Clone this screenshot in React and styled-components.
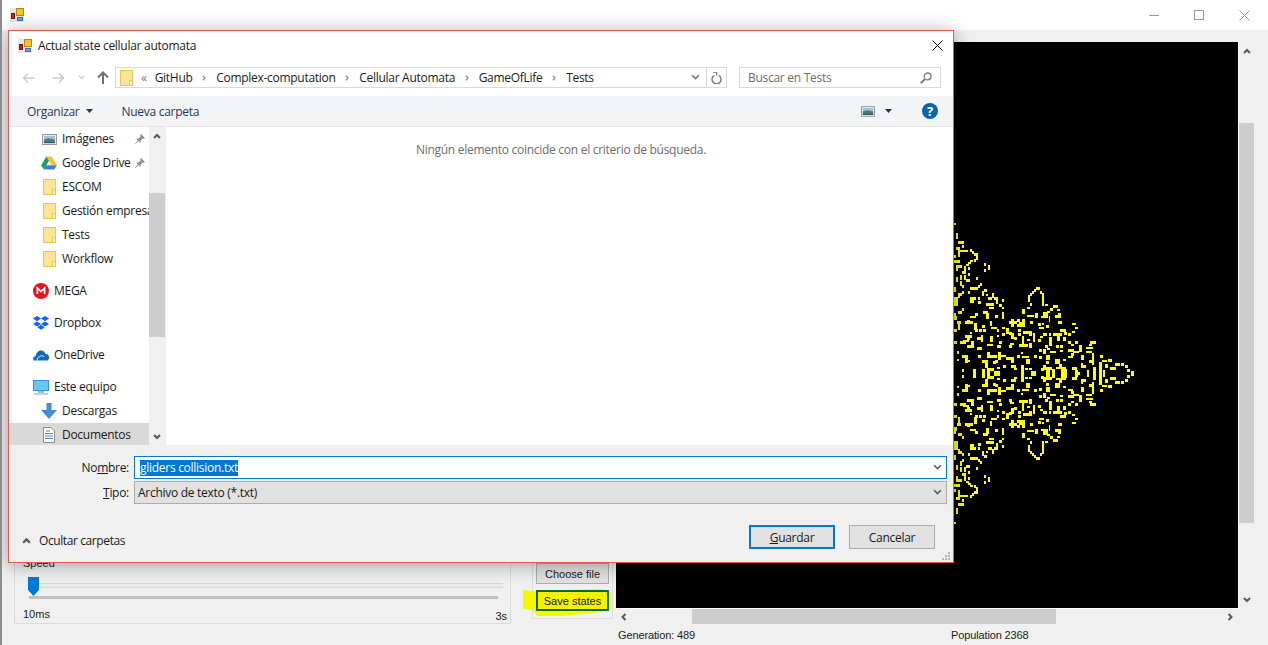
import React from 'react'
import styled, { createGlobalStyle } from 'styled-components'

const GlobalStyle = createGlobalStyle`
  html, body {
    margin: 0;
    padding: 0;
    overflow: hidden;
    background: #f0f0f0;
  }
  * { box-sizing: border-box; }
`

const UI_FONT = `'Open Sans', 'Noto Sans', sans-serif`
const FORM_FONT = `'Liberation Sans', Arial, sans-serif`

/* ---------- automaton cells, read off the picture in 3x crop coordinates ---------- */
const TOP_LEFT = [
  [12,8,6,6],[18,40,6,16],[24,64,18,6],[36,76,6,6],[18,82,12,6],[24,90,30,6],[24,96,6,14],[60,88,6,6],[66,94,6,6],
  [72,100,12,6],[78,106,6,12],[12,106,6,6],[12,120,18,8],[72,118,6,6],[60,120,8,6],[54,126,8,6],[48,132,8,6],
  [102,130,6,6],[114,136,6,12],[102,148,6,6],[18,136,6,16],[24,136,12,6],[42,138,6,18],[36,154,12,6],[54,142,6,6],
  [54,160,6,6],[18,172,6,12],[30,166,6,14],[42,166,6,14],[48,178,12,6],[30,184,6,12],[78,172,6,6],[36,196,6,6],
  [12,202,6,12],[60,202,24,6],[84,196,6,6],[90,190,6,6],[102,208,8,6],[96,214,6,12],[108,222,6,6],[36,214,6,6],
  [24,220,12,6],[54,214,6,6],[24,226,6,6],[60,232,18,6],[12,232,12,24],[126,220,6,12],[114,232,12,6],[84,232,6,6],
  [132,232,12,6],[138,238,6,12],[156,238,6,6],[240,220,6,6],[246,214,6,6],[252,208,6,6],[258,202,12,6],[270,214,6,6],
  [276,226,6,30],[234,226,6,18],
]
const MIDDLE = [
  [60,0,12,8],[84,4,8,8],[108,8,24,8],[116,20,16,6],[148,12,6,8],[156,20,6,6],[240,8,6,10],[232,20,8,6],[24,32,12,8],
  [36,24,6,8],[12,40,6,6],[60,48,16,6],[76,40,6,8],[100,32,12,8],[108,40,8,16],[52,60,8,6],[12,48,8,12],[136,44,8,8],
  [156,36,6,20],[216,28,8,12],[232,44,20,6],[256,40,6,12],[280,36,8,10],[272,48,14,6],[296,48,4,16],[20,64,12,6],
  [44,64,24,8],[72,68,8,20],[24,70,6,18],[120,64,6,12],[176,64,8,8],[184,56,8,24],[192,64,8,8],[200,58,8,6],[208,66,8,6],
  [216,56,8,24],[200,72,16,8],[240,64,8,6],[264,68,8,8],[288,76,8,8],[96,76,8,6],[156,80,8,6],[100,88,8,6],[88,88,6,6],
  [76,88,6,6],[124,80,16,6],[140,88,6,6],[168,84,8,16],[176,96,8,8],[204,88,8,8],[220,92,24,8],[236,100,8,8],[268,80,12,6],
  [12,88,8,6],[60,96,6,6],[44,104,20,8],[52,112,8,8],[40,120,16,6],[92,104,6,20],[80,112,12,6],[120,108,8,16],[140,104,6,6],
  [156,100,8,6],[184,100,8,16],[192,112,8,8],[204,100,8,8],[248,100,6,24],[216,108,6,24],[280,100,8,6],[296,100,4,8],
  [264,116,8,8],[30,124,18,6],[12,124,8,6],[64,124,8,18],[52,136,20,6],[148,124,8,6],[180,128,12,6],[176,136,8,8],
  [208,132,24,8],[232,116,6,6],[236,128,8,14],[80,140,16,8],[112,132,16,6],[140,136,12,6],[20,152,6,8],[268,148,6,6],
  [280,152,8,8],[36,164,16,8],[44,172,8,16],[52,180,8,6],[84,164,8,8],[112,156,8,16],[120,164,20,8],[144,156,8,24],
  [152,164,16,6],[168,172,14,6],[184,172,8,16],[200,164,8,8],[212,156,6,6],[216,168,20,6],[228,176,12,16],[252,164,8,8],
  [268,168,8,8],[288,164,12,8],[96,180,16,8],[104,188,8,14],[128,184,8,6],[136,180,8,8],[20,176,6,6],[36,208,6,6],
  [68,208,8,16],[96,208,8,16],[112,204,20,8],[112,212,8,12],[132,212,16,12],[160,196,8,8],[184,196,12,8],[192,204,8,6],
  [212,196,8,28],[224,204,8,6],[236,204,8,6],[244,212,14,12],[272,204,8,8],[280,196,8,8],[288,204,8,20],[140,200,8,6],
]
const TIP = [
  [0,32,6,6],[6,40,6,24],[14,72,8,6],[38,76,16,6],[30,84,8,8],[50,86,8,6],[14,96,8,16],[54,98,8,16],[22,92,6,6],[46,106,6,6],
  [54,124,12,6],[6,128,6,6],[96,128,12,6],[0,140,6,6],[104,140,8,6],[60,148,16,6],[96,152,8,6],[12,160,8,6],[26,160,6,6],
  [40,160,24,6],[72,156,8,8],[84,160,8,6],[0,168,8,6],[28,172,8,24],[52,168,8,14],[70,172,8,10],[150,184,16,6],[146,192,8,6],
  [84,184,8,6],[104,184,8,6],[92,192,8,6],[138,200,20,6],[138,212,16,6],[14,196,8,6],[22,204,8,6],[48,196,8,6],[60,196,8,6],
  [60,210,8,6],[0,208,6,6],[8,208,8,6],[30,212,16,6],[84,208,16,6],[116,196,8,20],[100,212,16,6],[92,220,8,6],[84,228,14,6],
  [124,224,6,14],[180,226,8,8],[156,220,6,34],[148,240,8,8],[18,232,12,6],[46,236,12,6],[70,236,6,6],[204,238,12,6],
  [186,240,14,6],[18,244,8,8],[44,244,16,8],[56,252,10,8],[178,246,8,24],[122,248,6,14],[130,256,8,8],[226,250,14,6],
  [244,250,6,6],[196,252,6,12],[254,256,8,8],[8,260,28,8],[48,260,30,6],[96,262,14,8],[160,262,8,22],[176,268,8,16],
  [210,262,18,6],[262,266,8,8],[272,274,8,10],[20,268,8,16],[36,268,8,16],[62,268,8,16],[72,268,8,16],[104,270,8,14],
  [112,278,8,6],[140,270,6,14],[188,270,6,14],
]

const CENTER_Y = 373.5
const cellPath = () => {
  let d = ''
  const add = (list, ox, oy) => {
    list.forEach(([x, y, w, h]) => {
      const px = (ox + x / 3 - 616).toFixed(2)
      const py = oy + y / 3
      const pw = (w / 3 + 0.3).toFixed(2)
      const ph = h / 3 + 0.3
      const mirrored = 2 * CENTER_Y - py - ph
      d += `M${px} ${(py - 42).toFixed(2)}h${pw}v${ph.toFixed(2)}h${-pw}z`
      d += `M${px} ${(mirrored - 42).toFixed(2)}h${pw}v${ph.toFixed(2)}h${-pw}z`
    })
  }
  add(TOP_LEFT, 950, 220)
  add(MIDDLE, 950, 300)
  add(TIP, 1040, 280)
  return d
}
const CELLS = cellPath()

/* ---------- icons ---------- */
const AppIcon = () => (
  <svg width="14" height="14" viewBox="0 0 14 14">
    <rect x="0" y="0" width="14" height="14" fill="#e6e6e6" />
    <rect x="6.5" y="0.5" width="7" height="7" fill="#f6c519" stroke="#a98a20" />
    <rect x="1.5" y="5.5" width="3" height="5" fill="#c5221c" stroke="#7a1512" />
    <rect x="7.5" y="9.5" width="5" height="3" fill="#6ea3e0" stroke="#3f6fae" />
  </svg>
)

const Folder = ({ w = 13, h = 16 }) => (
  <svg width={w} height={h} viewBox="0 0 13 16">
    <rect x="0.5" y="0.5" width="12" height="15" fill="#fde595" stroke="#eac65a" />
    <rect x="9.5" y="10.5" width="3" height="5" fill="#fff1b8" stroke="#eac65a" />
  </svg>
)

const PicturesIcon = ({ w = 16, h = 12 }) => (
  <svg width={w} height={h} viewBox="0 0 16 12">
    <rect x="0.5" y="0.5" width="15" height="11" fill="#eef3f5" stroke="#8d8d8d" />
    <rect x="2" y="2" width="12" height="4" fill="#9fc3dd" />
    <path d="M2 6 L7 4.6 L14 6 V8 H2 Z" fill="#4f7f6a" />
    <rect x="2" y="8" width="12" height="2" fill="#27506b" />
  </svg>
)

const DriveIcon = () => (
  <svg width="16" height="14" viewBox="0 0 16 14">
    <path d="M5.3 0.5 H10.6 L15.8 9 H10.7 Z" fill="#fbc02d" />
    <path d="M5.3 0.5 L0.2 9.5 L2.8 13.5 L8 4.8 Z" fill="#1e9e5a" />
    <path d="M5.2 9.3 H15.8 L13.2 13.5 H2.8 Z" fill="#3f7fe8" />
  </svg>
)

const MegaIcon = () => (
  <svg width="16" height="16" viewBox="0 0 16 16">
    <circle cx="8" cy="8" r="8" fill="#e3141e" />
    <path d="M4.4 11 V5 L8 8.6 L11.6 5 V11" fill="none" stroke="#fff" strokeWidth="1.7" />
  </svg>
)

const DropboxIcon = () => (
  <svg width="16" height="14" viewBox="0 0 16 14">
    <path
      d="M4 0 L8 2.6 L4 5.2 L0 2.6 Z M12 0 L16 2.6 L12 5.2 L8 2.6 Z M4 5.4 L8 8 L4 10.6 L0 8 Z M12 5.4 L16 8 L12 10.6 L8 8 Z M8 8.8 L11.6 11.2 L8 13.8 L4.4 11.2 Z"
      fill="#0f62fe"
    />
  </svg>
)

const OneDriveIcon = () => (
  <svg width="16" height="11" viewBox="0 0 16 11">
    <path
      d="M0.6 10.6 C-0.6 8.6 0.4 6.4 2.6 6.2 C3 3 5.4 0.4 8.4 0.6 C10.4 0.7 11.8 2 12.4 3.8 C14.8 3.8 16.4 5.8 16 8 C15.8 9.6 14.8 10.6 13.6 10.6 Z"
      fill="#0f6cbd"
    />
    <path d="M4.4 10.6 C3.6 8.6 5 6.8 6.8 6.8 C7.6 5.4 10 5.2 11 6.8" fill="none" stroke="#fff" strokeWidth="0.9" />
  </svg>
)

const MonitorIcon = () => (
  <svg width="16" height="15" viewBox="0 0 16 15">
    <rect x="0" y="0" width="16" height="11" fill="#2a9ae4" />
    <rect x="1" y="1" width="14" height="9" fill="#6fc4f2" />
    <rect x="5" y="11" width="6" height="2" fill="#a9b6bf" />
    <rect x="1" y="13" width="14" height="2" fill="#c8d1d6" />
  </svg>
)

const DownloadIcon = () => (
  <svg width="16" height="16" viewBox="0 0 16 16">
    <path d="M5.5 0 H10.5 V7 H16 L8 16 L0 7 H5.5 Z" fill="#3f8fdc" />
  </svg>
)

const DocsIcon = () => (
  <svg width="12" height="16" viewBox="0 0 12 16">
    <path d="M0.5 0.5 H8 L11.5 4 V15.5 H0.5 Z" fill="#fafafa" stroke="#8e8e8e" />
    <path d="M3 4 H7 M2 6.5 H10 M2 9 H10 M2 11.5 H10" stroke="#4f88c4" strokeWidth="1" />
  </svg>
)

const PinIcon = () => (
  <svg width="10" height="10" viewBox="0 0 10 10">
    <path d="M6 0 L10 4 L8.8 4.8 L7.6 4.4 L5.6 6.6 L5.6 8 L4.8 8.6 L1.6 5.2 L2.2 4.4 L3.6 4.4 L5.6 2.4 L5.2 1.2 Z" fill="#8f8f8f" />
    <path d="M3 7 L0.4 9.6" stroke="#8f8f8f" />
  </svg>
)

const Chevron = ({ dir = 'down', color = '#5a5a5a', size = 8, weight = 2 }) => {
  const points = {
    down: '1,2 4,5 7,2',
    up: '1,6 4,3 7,6',
    left: '5.5,1 2.5,4 5.5,7',
    right: '2.5,1 5.5,4 2.5,7',
  }
  return (
    <svg width={size} height={size} viewBox="0 0 8 8">
      <polyline points={points[dir]} fill="none" stroke={color} strokeWidth={weight} />
    </svg>
  )
}

const Triangle = ({ color = '#1e395b' }) => (
  <svg width="7" height="4" viewBox="0 0 7 4">
    <path d="M0 0 H7 L3.5 4 Z" fill={color} />
  </svg>
)

const NavArrow = ({ left, color }) => (
  <svg width="13" height="12" viewBox="0 0 13 12">
    <path
      d={left ? 'M12.5 6 H1.5 M6 1.5 L1.5 6 L6 10.5' : 'M0.5 6 H11.5 M7 1.5 L11.5 6 L7 10.5'}
      fill="none"
      stroke={color}
      strokeWidth="1.4"
    />
  </svg>
)

const UpArrow = () => (
  <svg width="12" height="13" viewBox="0 0 12 13">
    <path d="M6 13 V1.5 M1 6.5 L6 1.5 L11 6.5" fill="none" stroke="#6f6f6f" strokeWidth="2" />
  </svg>
)

const RefreshIcon = () => (
  <svg width="11" height="12" viewBox="0 0 11 12">
    <path d="M3.5 2.8 A4.5 4.5 0 1 0 8 2.8" fill="none" stroke="#7a7a7a" strokeWidth="1.4" transform="translate(-0.2 0.6)" />
    <path d="M2 0 H5.6 V3.6" fill="none" stroke="#7a7a7a" strokeWidth="1.3" />
  </svg>
)

const SearchIcon = () => (
  <svg width="12" height="12" viewBox="0 0 12 12">
    <circle cx="7.6" cy="4.4" r="3.4" fill="none" stroke="#7f7f7f" strokeWidth="1.3" />
    <path d="M5 7 L0.8 11.2" stroke="#7f7f7f" strokeWidth="2" />
  </svg>
)

const CloseIcon = ({ color = '#000', size = 11 }) => (
  <svg width={size} height={size} viewBox="0 0 11 11">
    <path d="M0.5 0.5 L10.5 10.5 M10.5 0.5 L0.5 10.5" stroke={color} fill="none" />
  </svg>
)

const Grip = () => (
  <svg width="8" height="8" viewBox="0 0 8 8">
    <path d="M6 0h2v2h-2z M3 3h2v2h-2z M6 3h2v2h-2z M0 6h2v2h-2z M3 6h2v2h-2z M6 6h2v2h-2z" fill="#b5b5b5" />
  </svg>
)

/* ---------- main window ---------- */
const Window = styled.div`
  width: 1268px;
  height: 645px;
  position: relative;
  display: flex;
  flex-direction: column;
  overflow: hidden;
  background: #f0f0f0;
  border-left: 2px solid #8c8c8c;
  font-family: ${FORM_FONT};
  font-size: 11px;
  color: #111;
`

const TitleBar = styled.div`
  height: 30px;
  flex: none;
  background: #fff;
  display: flex;
  align-items: center;
  padding-left: 8px;
  padding-right: 1px;
`

const WindowButtons = styled.div`
  margin-left: auto;
  display: flex;
`

const WindowButton = styled.div`
  width: ${({ $wide }) => ($wide ? 46 : 45)}px;
  height: 30px;
  display: flex;
  align-items: center;
  justify-content: center;
`

const MinLine = styled.div`
  width: 10px;
  height: 1px;
  background: #999;
`

const MaxBox = styled.div`
  width: 10px;
  height: 10px;
  border: 1px solid #999;
`

const Main = styled.div`
  flex: 1;
  display: flex;
  min-height: 0;
`

const LeftPanel = styled.div`
  width: 614px;
  flex: none;
  display: flex;
  align-items: flex-end;
  padding: 0 0 21px 12px;
`

const SpeedGroup = styled.div`
  width: 497px;
  height: 74px;
  border: 1px solid #dcdcdc;
  padding: 5px 7px 0 8px;
  display: flex;
  flex-direction: column;
`

const SpeedLabel = styled.div`
  height: 14px;
  line-height: 14px;
  color: #222;
`

const Slider = styled.div`
  position: relative;
  height: 23px;
  margin: 12px 0 0 5px;
`

const Rail = styled.div`
  margin-left: 11px;
  height: 5px;
  border-top: 1px solid #d6d6d6;
  border-bottom: 1px solid #d6d6d6;
  background: #ececec;
  transform: translateY(1px);
`

const Ticks = styled.div`
  margin: 9px 5px 0 1px;
  height: 3px;
  background: #c0c0c0;
`

const Thumb = styled.div`
  position: absolute;
  left: 0;
  top: -5px;
  width: 11px;
  height: 19px;
  background: #0078d7;
  clip-path: polygon(0 0, 100% 0, 100% 68%, 50% 100%, 0 68%);
`

const SpeedScale = styled.div`
  display: flex;
  justify-content: space-between;
  margin: 3px -4px 0 0;
  color: #222;
`

const ScaleEnd = styled.span`
  margin-top: 2px;
`

const FileGroup = styled.div`
  position: relative;
  width: 81px;
  height: 69px;
  margin-left: 21px;
  margin-bottom: 5px;
  border: 1px solid #dcdcdc;
  padding: 12px 3px 0 3px;
  display: flex;
  flex-direction: column;
  gap: 6px;
`

const FormButton = styled.div`
  position: relative;
  width: 73px;
  height: 21px;
  display: flex;
  align-items: center;
  justify-content: center;
  color: #1a1a1a;
  background: ${({ $hot }) => ($hot ? '#f2f200' : '#e1e1e1')};
  border: ${({ $hot }) => ($hot ? '2px solid #0b6a2c' : '1px solid #adadad')};
  border-right-color: ${({ $hot }) => ($hot ? '#0078d7' : '#adadad')};
`

const Highlight = styled.svg`
  position: absolute;
  left: -12px;
  bottom: 0;
`

const Workspace = styled.div`
  flex: 1;
  padding-top: 12px;
  display: flex;
  flex-direction: column;
  min-width: 0;
`

const CanvasRow = styled.div`
  display: flex;
  height: 567px;
  flex: none;
`

const Canvas = styled.div`
  width: 623px;
  height: 567px;
  flex: none;
  background: #000;
  border-right: 1px solid #fff;
  border-bottom: 1px solid #fff;
`

const VScroll = styled.div`
  width: 16px;
  height: 566px;
  flex: none;
  display: flex;
  flex-direction: column;
  align-items: center;
`

const VThumb = styled.div`
  width: 15px;
  height: 400px;
  margin-top: 64px;
  background: #cdcdcd;
  align-self: flex-start;
`

const ScrollArrow = styled.div`
  width: 16px;
  height: 17px;
  flex: none;
  display: flex;
  align-items: center;
  justify-content: center;
  margin-top: ${({ $push }) => ($push ? 'auto' : '0')};
  margin-left: ${({ $pushX }) => ($pushX ? 'auto' : '0')};
`

const HScroll = styled.div`
  width: 622px;
  height: 16px;
  flex: none;
  display: flex;
  align-items: center;
`

const HThumb = styled.div`
  width: 364px;
  height: 15px;
  margin-left: 60px;
  align-self: flex-start;
  background: #cdcdcd;
`

const Status = styled.div`
  display: grid;
  grid-template-columns: 333px auto;
  padding: 3px 0 0 2px;
  line-height: 14px;
  letter-spacing: -0.13px;
  color: #222;
`

/* ---------- save dialog ---------- */
const Dialog = styled.div`
  position: absolute;
  left: 6px;
  top: 30px;
  width: 946px;
  height: 533px;
  background: #fff;
  border: 1px solid #e8584c;
  box-shadow: 0 2px 18px rgba(0, 0, 0, 0.35);
  display: flex;
  flex-direction: column;
  font-family: ${UI_FONT};
  font-size: 12px;
  letter-spacing: -0.28px;
  color: #1a1a1a;
`

const DialogTitle = styled.div`
  height: 35px;
  flex: none;
  display: flex;
  align-items: center;
  gap: 6px;
  padding: 0 10px 6px 9px;
`

const CloseSlot = styled.div`
  margin-left: auto;
  display: flex;
`

const NavBar = styled.div`
  height: 30px;
  flex: none;
  display: flex;
  align-items: flex-start;
  padding: 1px 12px 0 13px;
`

const NavButtons = styled.div`
  height: 21px;
  width: 93px;
  flex: none;
  display: flex;
  align-items: center;
`

const NavSlot = styled.div`
  width: ${({ $w }) => $w}px;
  flex: none;
  display: flex;
  justify-content: center;
`

const FieldBox = styled.div`
  height: 21px;
  border: 1px solid #d9d9d9;
  display: flex;
  align-items: center;
  background: #fff;
  flex: ${({ $grow }) => ($grow ? 1 : 'none')};
  width: ${({ $w }) => ($w ? `${$w}px` : 'auto')};
  margin-left: ${({ $ml }) => $ml || 0}px;
  padding-left: ${({ $pl }) => $pl || 0}px;
`

const Crumb = styled.span`
  color: #1a1a1a;
  white-space: nowrap;
`

const Sep = styled.span`
  margin: 0 8.8px;
  display: flex;
`

const Overflow = styled.span`
  margin: 0 8px 0 8px;
  color: #7a7a7a;
`

const AddressEnd = styled.div`
  margin-left: auto;
  height: 100%;
  display: flex;
  align-items: center;
`

const RefreshSlot = styled.div`
  width: 20px;
  height: 100%;
  margin-left: 6px;
  border-left: 1px solid #d9d9d9;
  display: flex;
  align-items: center;
  justify-content: center;
`

const SearchHint = styled.span`
  color: #6d6d6d;
`

const SearchSlot = styled.div`
  margin-left: auto;
  padding-right: 8px;
  display: flex;
`

const Toolbar = styled.div`
  height: 31px;
  flex: none;
  background: #f3f4f6;
  border-bottom: 1px solid #e6e6e6;
  display: flex;
  align-items: center;
  padding: 0 15px 0 18px;
  color: #1e395b;
`

const ToolButton = styled.div`
  display: flex;
  align-items: center;
  gap: ${({ $gap }) => $gap || 5}px;
  margin-left: ${({ $ml }) => $ml || 0}px;
`

const HelpBadge = styled.div`
  width: 16px;
  height: 16px;
  border-radius: 50%;
  background: #0a64b4;
  color: #fff;
  font-weight: 700;
  font-size: 13px;
  line-height: 16px;
  text-align: center;
  margin-left: 30px;
`

const ToolEnd = styled.div`
  margin-left: auto;
  display: flex;
  align-items: center;
`

const Body = styled.div`
  height: 318px;
  flex: none;
  display: flex;
  background: #fff;
`

const NavPane = styled.div`
  width: 140px;
  flex: none;
  overflow: hidden;
  white-space: nowrap;
`

const NavRow = styled.div`
  height: 24px;
  display: flex;
  align-items: center;
  margin-top: ${({ $gap }) => ($gap ? '8px' : 0)};
  background: ${({ $selected }) => ($selected ? '#d9d9d9' : 'transparent')};
`

const NavIcon = styled.div`
  width: 16px;
  flex: none;
  display: flex;
  justify-content: center;
  margin-left: ${({ $indent }) => ($indent ? 32 : 24)}px;
  margin-right: 5px;
`

const NavText = styled.span`
  margin-top: -2px;
`

const NavPin = styled.div`
  display: flex;
  margin-left: auto;
  padding-right: 4px;
`

const PaneScroll = styled.div`
  width: 16px;
  flex: none;
  background: #f0f0f0;
  display: flex;
  flex-direction: column;
  align-items: center;
`

const PaneThumb = styled.div`
  width: 16px;
  height: 144px;
  margin-top: 49px;
  background: #cdcdcd;
`

const Results = styled.div`
  flex: 1;
  padding: 16px 0 0 3px;
  text-align: center;
  color: #6d6d6d;
  line-height: 14px;
  border-left: 1px solid #f0f0f0;
`

const Bottom = styled.div`
  flex: 1;
  position: relative;
  background: #f0f0f0;
  padding: 11px 6px 0 0;
  display: flex;
  flex-direction: column;
  gap: 2px;
`

const FieldRow = styled.div`
  display: flex;
  align-items: center;
  height: 23px;
`

const FieldLabel = styled.label`
  width: 120px;
  margin-right: 5px;
  text-align: right;
  color: #1a1a1a;
  flex: none;
`

const NameInput = styled.div`
  flex: 1;
  height: 23px;
  background: #fff;
  border: 1px solid #0078d7;
  display: flex;
  align-items: center;
  padding: 0 4px 0 5px;
`

const Selected = styled.span`
  background: #0078d7;
  color: #fff;
  line-height: 16px;
  white-space: nowrap;
`

const TypeSelect = styled.div`
  flex: 1;
  height: 23px;
  background: #e1e1e1;
  border: 1px solid #adadad;
  display: flex;
  align-items: center;
  padding: 0 4px 0 3px;
`

const ComboEnd = styled.div`
  margin-left: auto;
  display: flex;
`

const Footer = styled.div`
  display: flex;
  align-items: center;
  margin-top: 19px;
  padding: 0 12px 0 13px;
  gap: 14px;
`

const Toggle = styled.div`
  display: flex;
  align-items: center;
  gap: 8px;
  margin-right: auto;
  padding-top: 6px;
  letter-spacing: -0.4px;
`

const DialogButton = styled.div`
  width: 86px;
  height: 24px;
  display: flex;
  align-items: center;
  justify-content: center;
  background: #e1e1e1;
  border: ${({ $primary }) => ($primary ? '2px solid #0078d7' : '1px solid #adadad')};
  color: #1a1a1a;
`

const GripSlot = styled.div`
  position: absolute;
  right: 3px;
  bottom: 2px;
  display: flex;
`

const folderItems = ['ESCOM', 'Gestión empresa', 'Tests', 'Workflow']
const crumbs = ['GitHub', 'Complex-computation', 'Cellular Automata', 'GameOfLife', 'Tests']

const App = () => (
  <Window>
    <GlobalStyle />
    <TitleBar>
      <AppIcon />
      <WindowButtons>
        <WindowButton><MinLine /></WindowButton>
        <WindowButton><MaxBox /></WindowButton>
        <WindowButton $wide><CloseIcon color="#999" /></WindowButton>
      </WindowButtons>
    </TitleBar>

    <Main>
      <LeftPanel>
        <SpeedGroup>
          <SpeedLabel>Speed</SpeedLabel>
          <Slider>
            <Thumb />
            <Rail />
            <Ticks />
          </Slider>
          <SpeedScale>
            <span>10ms</span>
            <ScaleEnd>3s</ScaleEnd>
          </SpeedScale>
        </SpeedGroup>
        <FileGroup>
          <Highlight width="92" height="32" viewBox="0 0 92 32">
            <path
              d="M2 4 L14 5 L80 3 L90 6 L90 24 L72 27 L40 30 L16 30 L12 24 L2 23 Z"
              fill="#f6f600"
            />
          </Highlight>
          <FormButton>Choose file</FormButton>
          <FormButton $hot>Save states</FormButton>
        </FileGroup>
      </LeftPanel>

      <Workspace>
        <CanvasRow>
          <Canvas>
            <svg width="622" height="566" viewBox="0 0 622 566" shapeRendering="crispEdges">
              <path d={CELLS} fill="#ffff00" />
            </svg>
          </Canvas>
          <VScroll>
            <ScrollArrow><Chevron dir="up" /></ScrollArrow>
            <VThumb />
            <ScrollArrow $push><Chevron dir="down" /></ScrollArrow>
          </VScroll>
        </CanvasRow>
        <HScroll>
          <ScrollArrow><Chevron dir="left" /></ScrollArrow>
          <HThumb />
          <ScrollArrow $pushX><Chevron dir="right" /></ScrollArrow>
        </HScroll>
        <Status>
          <span>Generation: 489</span>
          <span>Population 2368</span>
        </Status>
      </Workspace>
    </Main>

    <Dialog>
      <DialogTitle>
        <AppIcon />
        <span>Actual state cellular automata</span>
        <CloseSlot><CloseIcon /></CloseSlot>
      </DialogTitle>

      <NavBar>
        <NavButtons>
          <NavSlot $w={13}><NavArrow left color="#c9c9c9" /></NavSlot>
          <NavSlot $w={17} />
          <NavSlot $w={13}><NavArrow color="#c9c9c9" /></NavSlot>
          <NavSlot $w={32}><Chevron dir="down" color="#c9c9c9" size={7} weight={1.4} /></NavSlot>
          <NavSlot $w={12}><UpArrow /></NavSlot>
        </NavButtons>
        <FieldBox $w={612} $pl={4}>
          <Folder />
          <Overflow>«</Overflow>
          {crumbs.map((crumb, i) => (
            <React.Fragment key={crumb}>
              {i > 0 && <Sep><Chevron dir="right" color="#8a8a8a" size={6} weight={1.5} /></Sep>}
              <Crumb>{crumb}</Crumb>
            </React.Fragment>
          ))}
          <AddressEnd>
            <Chevron dir="down" color="#7a7a7a" size={9} weight={1.5} />
            <RefreshSlot><RefreshIcon /></RefreshSlot>
          </AddressEnd>
        </FieldBox>
        <FieldBox $grow $ml={12} $pl={8}>
          <SearchHint>Buscar en Tests</SearchHint>
          <SearchSlot><SearchIcon /></SearchSlot>
        </FieldBox>
      </NavBar>

      <Toolbar>
        <ToolButton $gap={6}>Organizar <Triangle /></ToolButton>
        <ToolButton $ml={29}>Nueva carpeta</ToolButton>
        <ToolEnd>
          <PicturesIcon w={14} h={11} />
          <ToolButton $ml={10}><Triangle /></ToolButton>
          <HelpBadge>?</HelpBadge>
        </ToolEnd>
      </Toolbar>

      <Body>
        <NavPane>
          <NavRow>
            <NavIcon $indent><PicturesIcon w={15} h={11} /></NavIcon>
            <NavText>Imágenes</NavText>
            <NavPin><PinIcon /></NavPin>
          </NavRow>
          <NavRow>
            <NavIcon $indent><DriveIcon /></NavIcon>
            <NavText>Google Drive</NavText>
            <NavPin><PinIcon /></NavPin>
          </NavRow>
          {folderItems.map(name => (
            <NavRow key={name}>
              <NavIcon $indent><Folder /></NavIcon>
              <NavText>{name}</NavText>
            </NavRow>
          ))}
          <NavRow $gap>
            <NavIcon><MegaIcon /></NavIcon>
            <NavText>MEGA</NavText>
          </NavRow>
          <NavRow $gap>
            <NavIcon><DropboxIcon /></NavIcon>
            <NavText>Dropbox</NavText>
          </NavRow>
          <NavRow $gap>
            <NavIcon><OneDriveIcon /></NavIcon>
            <NavText>OneDrive</NavText>
          </NavRow>
          <NavRow $gap>
            <NavIcon><MonitorIcon /></NavIcon>
            <NavText>Este equipo</NavText>
          </NavRow>
          <NavRow>
            <NavIcon $indent><DownloadIcon /></NavIcon>
            <NavText>Descargas</NavText>
          </NavRow>
          <NavRow $selected>
            <NavIcon $indent><DocsIcon /></NavIcon>
            <NavText>Documentos</NavText>
          </NavRow>
        </NavPane>
        <PaneScroll>
          <ScrollArrow><Chevron dir="up" /></ScrollArrow>
          <PaneThumb />
          <ScrollArrow $push><Chevron dir="down" /></ScrollArrow>
        </PaneScroll>
        <Results>Ningún elemento coincide con el criterio de búsqueda.</Results>
      </Body>

      <Bottom>
        <FieldRow>
          <FieldLabel>No<u>m</u>bre:</FieldLabel>
          <NameInput>
            <Selected>gliders collision.txt</Selected>
            <ComboEnd><Chevron dir="down" color="#5a5a5a" size={9} weight={1.4} /></ComboEnd>
          </NameInput>
        </FieldRow>
        <FieldRow>
          <FieldLabel><u>T</u>ipo:</FieldLabel>
          <TypeSelect>
            Archivo de texto (*.txt)
            <ComboEnd><Chevron dir="down" color="#5a5a5a" size={9} weight={1.4} /></ComboEnd>
          </TypeSelect>
        </FieldRow>
        <Footer>
          <Toggle>
            <Chevron dir="up" color="#5a5a5a" size={9} />
            Ocultar carpetas
          </Toggle>
          <DialogButton $primary><span><u>G</u>uardar</span></DialogButton>
          <DialogButton>Cancelar</DialogButton>
        </Footer>
        <GripSlot><Grip /></GripSlot>
      </Bottom>
    </Dialog>
  </Window>
)

export default App
